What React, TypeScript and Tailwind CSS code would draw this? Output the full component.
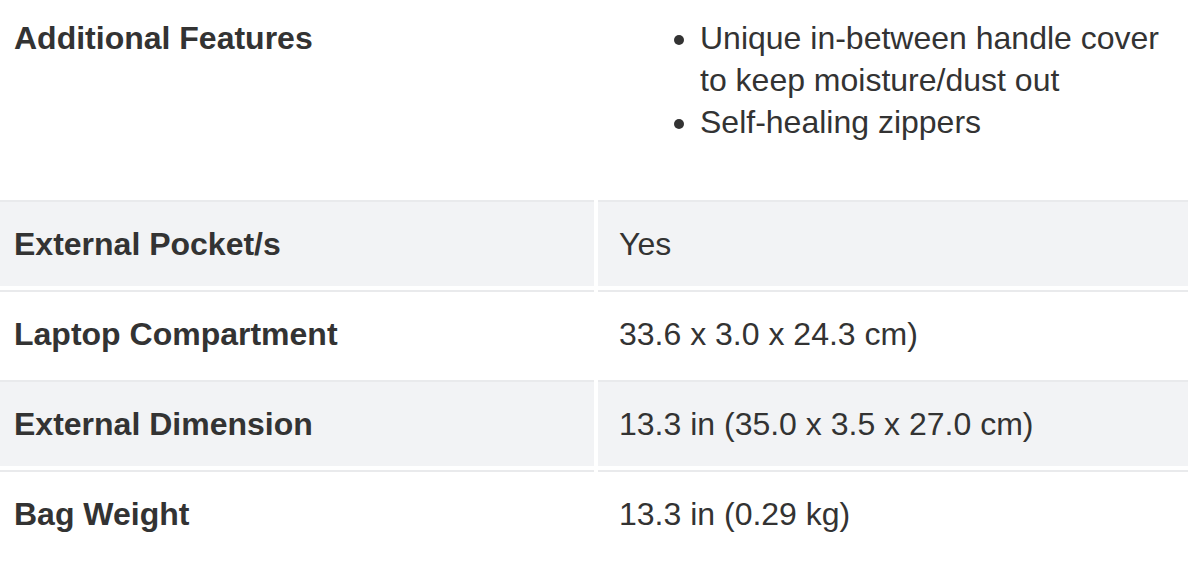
import React from 'react';

const rows = [
    { label: 'External Pocket/s', value: 'Yes' },
    { label: 'Laptop Compartment', value: '33.6 x 3.0 x 24.3 cm)' },
    { label: 'External Dimension', value: '13.3 in (35.0 x 3.5 x 27.0 cm)' },
    { label: 'Bag Weight', value: '13.3 in (0.29 kg)' },
];

const features = [
    'Unique in-between handle cover to keep moisture/dust out',
    'Self-healing zippers',
];

export default () => {
    return (
        <div className="w-[1188px] h-[575px] overflow-hidden bg-white text-[#333] font-['Liberation_Sans',Arial,sans-serif] text-[32px] leading-[42px]">
            <div className="grid grid-cols-[594px_590px] gap-[4px]">
                {/* first row, top is cut off in the shot */}
                <div className="pl-[14px] pt-[17px] pb-[21px] font-bold">Additional Features</div>
                <div className="pl-[21px] pr-[22px] pt-[17px] pb-[21px]">
                    <ul className="list-disc pl-[81px] mb-[32px]">
                        {features.map((f, i) => <li key={i}>{f}</li>)}
                    </ul>
                </div>

                {rows.map((r, i) => {
                    const bg = i % 2 === 0 ? 'bg-[#f2f3f5]' : 'bg-white';
                    return (
                        <React.Fragment key={i}>
                            <div className={`${bg} border-t-2 border-[#e9eaec] pl-[14px] py-[21px] font-bold`}>{r.label}</div>
                            <div className={`${bg} border-t-2 border-[#e9eaec] pl-[21px] py-[21px]`}>{r.value}</div>
                        </React.Fragment>
                    );
                })}
            </div>
        </div>
    );
};
